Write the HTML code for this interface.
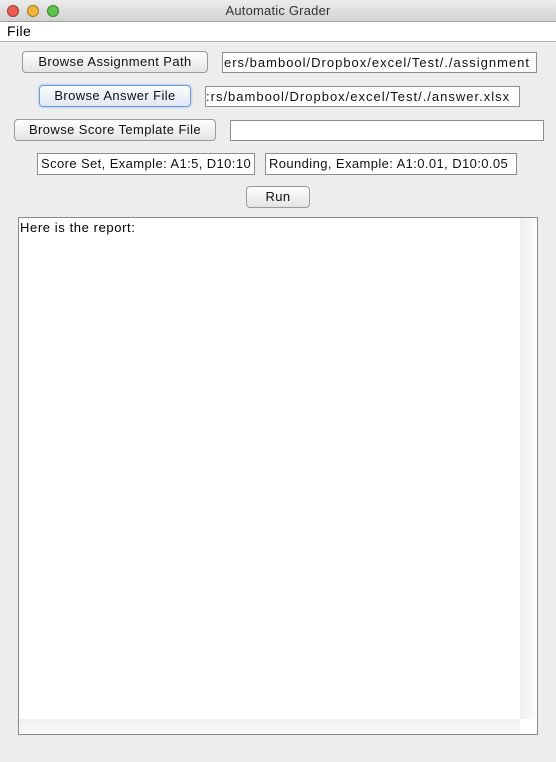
<!DOCTYPE html>
<html><head><style>
body{margin:0;width:556px;height:762px;background:#ededed;font-family:"Liberation Sans",sans-serif;font-size:13px;position:relative;overflow:hidden;letter-spacing:0.4px}
.a{position:absolute;box-sizing:border-box}
.title{left:0;top:0;width:556px;height:22px;background:linear-gradient(#ececec,#d2d2d2);border-bottom:1px solid #a0a0a0;text-align:center;line-height:21px;color:#333;font-size:13px;letter-spacing:0.2px}
.dot{width:12px;height:12px;border-radius:50%;top:5px;border:1px solid rgba(0,0,0,.35)}
.menu{left:0;top:22px;width:556px;height:20px;background:#fff;border-bottom:1px solid #b0b0b0;line-height:19px;padding-left:7px;font-size:14px}
.btn{background:linear-gradient(#fff,#f1f1f1 50%,#e4e4e4);border:1px solid #9a9a9a;border-radius:4px;text-align:center;line-height:19px;color:#111}
.fld{background:#fff;border:1px solid #8e8e8e;line-height:19px;padding-left:3px;white-space:nowrap;overflow:hidden;color:#111}
.p{letter-spacing:1px}
</style></head><body>
<div class="a title">Automatic Grader</div>
<div class="a dot" style="left:7px;background:#ee5a52"></div>
<div class="a dot" style="left:27px;background:#f5b638"></div>
<div class="a dot" style="left:47px;background:#5fc44c"></div>
<div class="a menu">File</div>
<div class="a btn" style="left:22px;top:51px;width:186px;height:22px">Browse Assignment Path</div>
<div class="a fld p" style="left:222px;top:52px;width:315px;height:21px;padding-left:1px">ers/bambool/Dropbox/excel/Test/./assignment</div>
<div class="a btn" style="left:39px;top:85px;width:152px;height:22px;border-color:#6a9bd8;box-shadow:0 0 2px #7fb0f0;background:linear-gradient(#fafcff,#e0e8f3)">Browse Answer File</div>
<div class="a fld p" style="left:205px;top:86px;width:315px;height:21px;padding-left:0">:rs/bambool/Dropbox/excel/Test/./answer.xlsx</div>
<div class="a btn" style="left:14px;top:119px;width:202px;height:22px">Browse Score Template File</div>
<div class="a fld" style="left:230px;top:120px;width:314px;height:21px"></div>
<div class="a fld" style="left:37px;top:153px;width:218px;height:22px;line-height:20px">Score Set, Example: A1:5, D10:10</div>
<div class="a fld" style="left:265px;top:153px;width:252px;height:22px;line-height:20px">Rounding, Example: A1:0.01, D10:0.05</div>
<div class="a btn" style="left:246px;top:186px;width:64px;height:22px">Run</div>
<div class="a" style="left:18px;top:217px;width:520px;height:518px;background:#fff;border:1px solid #8a8a8a">
<div style="padding:2px 0 0 1px;letter-spacing:0.6px">Here is the report:</div>
<div class="a" style="left:501px;top:0;width:15px;height:501px;background:linear-gradient(90deg,#f0f0f0,#fafafa)"></div>
<div class="a" style="left:0;top:501px;width:501px;height:15px;background:linear-gradient(#f0f0f0,#fafafa)"></div>
</div>
</body></html>
